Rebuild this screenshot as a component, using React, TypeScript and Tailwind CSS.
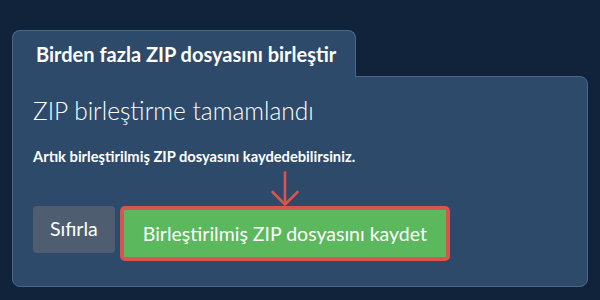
export default function App() {
  return (
    <div className="w-[600px] h-[300px] bg-[#10233a] px-[12px] pt-[30px] font-['Lato',sans-serif]">
      {/* tab */}
      <div className="relative z-10 -mb-px flex h-[47px] w-[344px] items-center rounded-t-[8px] border border-b-0 border-[#4d6887] bg-[#2d4a6a] pl-[23px]">
        <span className="text-[20px] font-bold text-white">Birden fazla ZIP dosyasını birleştir</span>
      </div>

      {/* panel */}
      <div className="h-[211px] w-[576px] rounded-b-[8px] rounded-tr-[8px] border border-[#4d6887] bg-[#2d4a6a] px-[20px] pt-[16px]">
        <h2 className="text-[24.5px] font-light leading-[36px] text-white">ZIP birleştirme tamamlandı</h2>
        <p className="mt-[16px] text-[14.7px] font-bold text-white">Artık birleştirilmiş ZIP dosyasını kaydedebilirsiniz.</p>

        <div className="mt-[4px] pl-[237px]">
          <svg width="30" height="36" viewBox="0 0 30 36" fill="none" stroke="#d9534f" strokeWidth="2.6" strokeLinecap="round" strokeLinejoin="round">
            <line x1="15" y1="1.5" x2="15" y2="33" />
            <polyline points="2.5,21 15,33.5 27.5,21" />
          </svg>
        </div>

        <div className="mt-[-1px] flex items-start gap-[5px]">
          <button className="h-[47px] rounded-[4px] bg-[#4e5e70] px-[17px] pb-[2px] text-[19.5px] text-white">Sıfırla</button>
          <button className="h-[55px] rounded-[5px] border-[4px] border-[#d9534f] bg-[#5cb85c] px-[19px] text-[19.5px] text-white">
            Birleştirilmiş ZIP dosyasını kaydet
          </button>
        </div>
      </div>
    </div>
  );
}
